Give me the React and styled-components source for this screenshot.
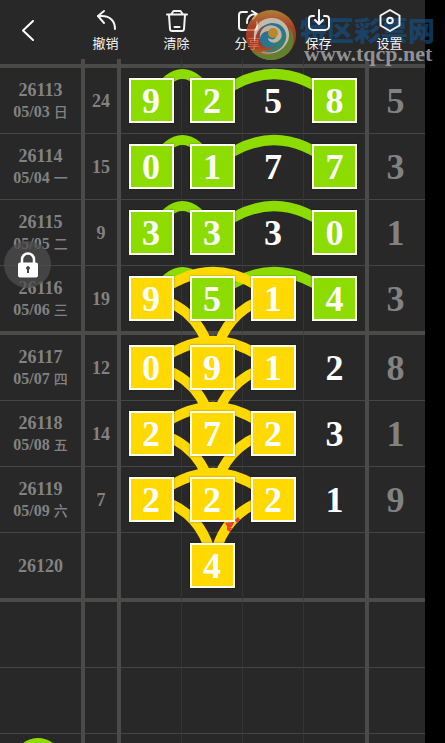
import React from 'react';
import styled, { createGlobalStyle } from 'styled-components';

const GlobalStyle = createGlobalStyle`
  * { box-sizing: border-box; }
  html, body { margin: 0; background: #000; }
  body { font-family: 'Liberation Serif', 'Noto Sans CJK SC', serif; }
`;

const GREEN = '#8cdc00';
const YELLOW = '#ffd900';
const LINE = '#4b4c4a';
const THIN = '#454545';

const Screen = styled.div`
  height: 100vh;
  padding-right: 20px;
  overflow: hidden;
  background: #000;
`;

const Panel = styled.main`
  position: relative;
  min-height: 100%;
  background: #282828;
`;

const Toolbar = styled.header`
  position: relative;
  z-index: 1;
  display: flex;
  height: 59px;
`;

const BackButton = styled.button`
  display: flex;
  align-items: center;
  width: 70px;
  padding: 2px 0 0 18px;
  border: 0;
  background: none;
  color: #fff;
`;

const ToolButton = styled.button`
  display: flex;
  flex: 1;
  flex-direction: column;
  align-items: center;
  gap: 2px;
  padding: 8px 0 0;
  border: 0;
  background: none;
  color: #f4f4f4;
  font: 13px/18px 'Noto Sans CJK SC', sans-serif;
`;

const Icon = styled.svg`
  display: block;
  fill: none;
  stroke: currentColor;
  stroke-width: 2;
  stroke-linecap: round;
  stroke-linejoin: round;
`;

const Board = styled.div`
  position: relative;
`;

const Chart = styled.table`
  width: 100%;
  table-layout: fixed;
  border-collapse: separate;
  border-spacing: 0;
`;

const Cell = styled.td`
  height: ${p => (p.$head ? 9 : p.$last ? 69 : 66)}px;
  padding: ${p => (p.$big ? '0 3px 0 0' : '0')};
  border: 0 solid ${LINE};
  border-bottom: ${p => (p.$last ? `4px solid ${LINE}` : `1px solid ${THIN}`)};
  border-right: ${p => (p.$edge === 'thick' ? `4px solid ${LINE}` : p.$edge === 'thin' ? '1px solid #343434' : '0')};
  text-align: center;
  vertical-align: middle;
  color: #828282;
  font-size: ${p => (p.$big ? 36 : 18)}px;
  font-weight: 700;
  line-height: 1;
`;

const Issue = styled.div`
  padding-top: 1px;
  font-size: 18px;
  line-height: 22px;
`;

const DateLine = styled.div`
  font-size: 16px;
  line-height: 22px;
`;

const Weekday = styled.span`
  font: 500 14px/14px 'Noto Sans CJK SC', sans-serif;
`;

const Digit = styled.span`
  position: relative;
  z-index: 2;
  display: flex;
  align-items: center;
  justify-content: center;
  width: 45px;
  height: 45px;
  margin: 0 auto;
  border: 2px solid ${p => (p.$fill ? '#fffff0' : 'transparent')};
  background: ${p => p.$fill || 'transparent'};
  box-shadow: ${p => (p.$fill ? '0 0 2px rgba(0, 0, 0, 0.35)' : 'none')};
  color: #fff;
  font-size: 36px;
  line-height: 40px;
`;

const Arcs = styled.svg`
  position: absolute;
  z-index: 1;
  top: 0;
  left: 0;
  width: 100%;
  height: 684px;
  fill: none;
  stroke-width: 10;
  pointer-events: none;
`;

const LockButton = styled.button`
  position: absolute;
  z-index: 3;
  top: 241px;
  left: 4px;
  display: flex;
  align-items: center;
  justify-content: center;
  width: 47px;
  height: 47px;
  padding: 0;
  border: 0;
  border-radius: 50%;
  background: rgba(78, 78, 78, 0.75);
`;

const Watermark = styled.div`
  position: absolute;
  top: 8px;
  right: -10px;
  display: flex;
  align-items: flex-start;
  gap: 7px;
  pointer-events: none;
`;

const Emblem = styled.svg`
  position: relative;
  z-index: 4;
  opacity: 0.76;
`;

const MarkText = styled.div`
  padding-top: 8px;
  white-space: nowrap;
`;

const MarkName = styled.div`
  margin-left: -4px;
  color: rgba(16, 82, 140, 0.65);
  font: 900 27px/28px 'Noto Sans CJK SC', sans-serif;
`;

const MarkUrl = styled.div`
  position: relative;
  z-index: 4;
  color: rgba(175, 175, 175, 0.8);
  font: 700 22px/20px 'Liberation Serif', serif;
`;

const TOOLS = [
  ['撤销', <><path d="m10 3-6 5 6 7" /><path d="M4 8h4c8 0 13 5 13 13" /></>],
  ['清除', <><path d="M2 6.500h20M6 6.500 8.500 3h7L18 6.500M4 7l1 14q.2 2 2 2h10q1.800 0 2-2l1-14M9.500 19h5" /></>],
  ['分享', <><path d="M11 4H6a3 3 0 0 0-3 3v12a3 3 0 0 0 3 3h12a3 3 0 0 0 3-3v-5M11 15c0-6 3-9 9-9M16 3l5 3-4 5" /></>],
  ['保存', <><path d="M7 8H5a3 3 0 0 0-3 3v7a4 4 0 0 0 4 4h12a4 4 0 0 0 4-4v-7a3 3 0 0 0-3-3h-2M12 2v13M8 12l4 4 4-4" /></>],
  ['设置', <><path d="m12 2 9.500 5.500v10L12 23l-9.500-5.500v-10Z" /><circle cx="12" cy="12.500" r="2.800" /></>],
];

const ROWS = [
  { issue: '26113', date: '05/03', day: '日', sum: 24, digits: '9258', marks: 'gg.g', tail: 5 },
  { issue: '26114', date: '05/04', day: '一', sum: 15, digits: '0177', marks: 'gg.g', tail: 3 },
  { issue: '26115', date: '05/05', day: '二', sum: 9, digits: '3330', marks: 'gg.g', tail: 1 },
  { issue: '26116', date: '05/06', day: '三', sum: 19, digits: '9514', marks: 'ygyg', tail: 3 },
  { issue: '26117', date: '05/07', day: '四', sum: 12, digits: '0912', marks: 'yyy.', tail: 8 },
  { issue: '26118', date: '05/08', day: '五', sum: 14, digits: '2723', marks: 'yyy.', tail: 1 },
  { issue: '26119', date: '05/09', day: '六', sum: 7, digits: '2221', marks: 'yyy.', tail: 9 },
  { issue: '26120', digits: ' 4  ', marks: '.y..' },
  {}, {}, {},
];

const FILLS = { g: GREEN, y: YELLOW };
const COLUMNS = [85, 36, 61, 61, 61, 65, 56];
const EDGES = ['thick', 'thick', 'thin', 'thin', 'thin', 'thick', 'none'];

/* Vertical centre of a row's digits, measured from the top of the board. */
const rowY = i => 9 + i * 66 + Math.floor(i / 4) * 3 + 32;
const arch = (x1, x2, y) => `M${x1} ${y}Q${(x1 + x2) / 2} ${y - 52} ${x2} ${y}`;
const drop = (x, y, nextY) => {
  const cx = x < 213 ? 205 : 221;
  return `M${x} ${y - 2}Q${cx} ${y + 11} 213 ${nextY}`;
};

function Links() {
  return (
    <Arcs viewBox="0 0 425 684" preserveAspectRatio="none" aria-hidden="true">
      <g stroke={GREEN}>
        {[0, 1, 2, 3].map(i => (
          <path key={i} d={arch(152, 213, rowY(i)) + arch(213, 335, rowY(i))} />
        ))}
        <path d={arch(7, 69, rowY(10) + 3)} />
      </g>
      <g stroke={YELLOW}>
        {[3, 4, 5, 6].map(i => (
          <path key={i} d={arch(152, 274, rowY(i)) + drop(152, rowY(i), rowY(i + 1)) + drop(274, rowY(i), rowY(i + 1))} />
        ))}
      </g>
      <path d="m225 464 9-1-2 5-4 1ZM235 461l3-3 2 3-3 3ZM227 468l5 1-2 4-3-2Z" fill="#f23c32" />
    </Arcs>
  );
}

function Logo() {
  return (
    <Emblem width="52" height="54" viewBox="0 0 52 54" aria-hidden="true">
      <defs>
        <linearGradient id="rim" x1="0" y1="0" x2="0" y2="1">
          <stop offset="0" stopColor="#d99a3a" />
          <stop offset="0.35" stopColor="#cf4a26" />
          <stop offset="0.7" stopColor="#c93a22" />
          <stop offset="1" stopColor="#dba52c" />
        </linearGradient>
        <linearGradient id="pool" x1="0" y1="0" x2="1" y2="1">
          <stop offset="0" stopColor="#2a7fc0" />
          <stop offset="0.6" stopColor="#2795ae" />
          <stop offset="1" stopColor="#5a9c3c" />
        </linearGradient>
      </defs>
      <circle cx="26" cy="27" r="25" fill="url(#rim)" />
      <path d="M5 40c9 9 22 9 31 2 8-6 10-15 8-24 8 12 5 25-7 31-12 6-26 2-32-9Z" fill="#6f9c35" />
      <path d="M10 35C5 18 17 9 28 10c13 1 20 14 14 25-5 9-16 13-26 9 9 0 17-4 20-11 4-9-2-17-10-17-10 0-16 8-16 19Z" fill="#f3e6d6" />
      <path d="M18 38c-7-9-3-22 9-23 12 0 17 11 13 19-4 9-13 12-22 10 6-1 10-3 13-6-5 2-10 2-13 0Z" fill="url(#pool)" />
      <path d="M15 30c-1-10 8-15 15-12 8 3 9 13 2 16-5 2-9-1-9-4 3 2 7 2 8-1 1-4-3-7-7-6-5 0-8 3-9 7Z" fill="#f1dfc4" />
      <circle cx="28" cy="25" r="5" fill="#e8a52d" />
    </Emblem>
  );
}

export default function App() {
  return (
    <Screen>
      <GlobalStyle />
      <Panel>
        <Watermark>
          <Logo />
          <MarkText>
            <MarkName>特区彩票网</MarkName>
            <MarkUrl>www.tqcp.net</MarkUrl>
          </MarkText>
        </Watermark>
        <Toolbar>
          <BackButton aria-label="返回">
            <Icon width="20" height="24" viewBox="0 0 20 24"><path d="M15 2 5 11.500 15 21" /></Icon>
          </BackButton>
          {TOOLS.map(([label, drawing]) => (
            <ToolButton key={label}>
              <Icon width="24" height="24" viewBox="0 0 24 24">{drawing}</Icon>
              {label}
            </ToolButton>
          ))}
        </Toolbar>
        <Board>
          <Links />
          <Chart>
            <colgroup>{COLUMNS.map((w, i) => <col key={i} width={w} />)}</colgroup>
            <thead>
              <tr>{EDGES.map((e, i) => <Cell key={i} $head $last $edge={e} />)}</tr>
            </thead>
            <tbody>
              {ROWS.map((row, i) => {
                const last = i % 4 === 3;
                return (
                  <tr key={i}>
                    <Cell $last={last} $edge="thick">
                      {row.issue && <Issue>{row.issue}</Issue>}
                      {row.date && <DateLine>{row.date} <Weekday>{row.day}</Weekday></DateLine>}
                    </Cell>
                    <Cell $last={last} $edge="thick">{row.sum}</Cell>
                    {[0, 1, 2, 3].map(d => (
                      <Cell key={d} $last={last} $edge={EDGES[d + 2]}>
                        {row.digits && row.digits[d] !== ' ' && (
                          <Digit $fill={FILLS[row.marks[d]]}>{row.digits[d]}</Digit>
                        )}
                      </Cell>
                    ))}
                    <Cell $last={last} $big>{row.tail}</Cell>
                  </tr>
                );
              })}
            </tbody>
          </Chart>
        </Board>
        <LockButton aria-label="锁定">
          <svg width="22" height="26" viewBox="0 0 22 26">
            <path d="M5 12V7.500a6 6 0 0 1 12 0V12" fill="none" stroke="#fff" strokeWidth="2.500" />
            <rect x="1" y="10.500" width="20" height="15" rx="2" fill="#fff" />
            <path d="M11 14a2 2 0 0 1 1 3.700V21h-2v-3.300A2 2 0 0 1 11 14Z" fill="#444" />
          </svg>
        </LockButton>
      </Panel>
    </Screen>
  );
}
